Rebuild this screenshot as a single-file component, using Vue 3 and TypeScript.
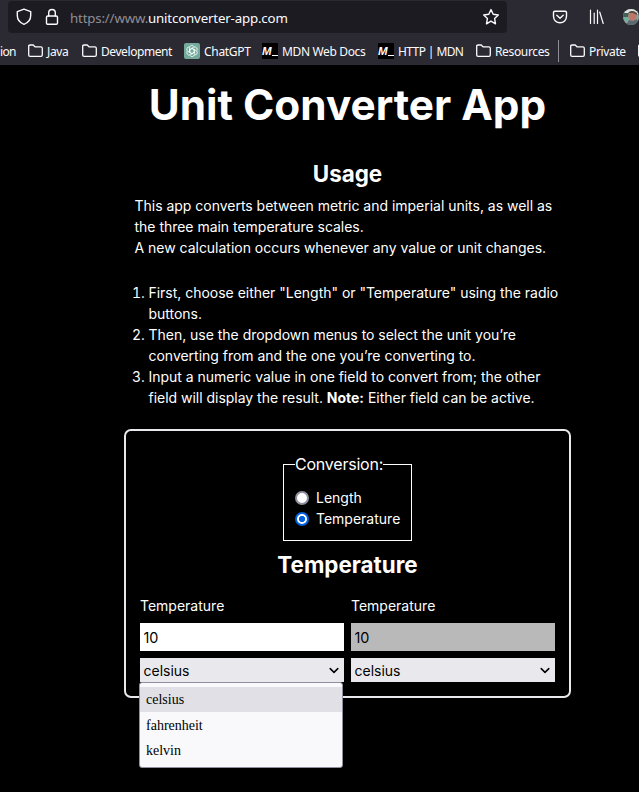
<script setup lang="ts">
import { ref } from 'vue'

interface Bookmark {
  label: string
  icon: 'none' | 'folder' | 'gpt' | 'mdn' | 'separator'
}

const bookmarks: Bookmark[] = [
  { label: 'ion', icon: 'none' },
  { label: 'Java', icon: 'folder' },
  { label: 'Development', icon: 'folder' },
  { label: 'ChatGPT', icon: 'gpt' },
  { label: 'MDN Web Docs', icon: 'mdn' },
  { label: 'HTTP | MDN', icon: 'mdn' },
  { label: 'Resources', icon: 'folder' },
  { label: '', icon: 'separator' },
  { label: 'Private', icon: 'folder' },
  { label: '', icon: 'folder' },
]

const conversions = ['Length', 'Temperature']
const conversion = ref('Temperature')
const units = ['celsius', 'fahrenheit', 'kelvin']
const fields = ref([
  { value: '10', unit: 'celsius', active: true, open: true },
  { value: '10', unit: 'celsius', active: false, open: false },
])
const petals = [0, 60, 120, 180, 240, 300]
</script>

<template>
  <div class="window">
    <header class="chrome">
      <div class="nav">
        <div class="urlbar">
          <svg class="shield" width="16" height="18" viewBox="0 0 16 18">
            <path d="M8 1.2 14.7 3.6V7.5C14.7 11.5 12.2 14.7 8 16.3 3.8 14.7 1.3 11.5 1.3 7.5V3.6Z" />
          </svg>
          <svg class="lock" width="14" height="18" viewBox="0 0 14 18">
            <rect x="1.5" y="8" width="11" height="8.3" rx="1.3" />
            <path d="M3.7 8V4.8a3.3 3.3 0 0 1 6.6 0V8" />
          </svg>
          <span class="url">https://www.<b>unitconverter-app.com</b></span>
          <svg class="star" width="18" height="18" viewBox="0 0 18 18">
            <path d="M9 1.6 11.2 6.3 16.3 7 12.6 10.5 13.5 15.8 9 13.2 4.5 15.8 5.4 10.5 1.7 7 6.8 6.3Z" />
          </svg>
        </div>
        <svg class="pocket" width="16" height="16" viewBox="0 0 16 16">
          <path d="M2.8 2.3H13.2Q14.5 2.3 14.5 3.6V7.3C14.5 11 11.7 13.7 8 13.7S1.5 11 1.5 7.3V3.6Q1.5 2.3 2.8 2.3Z" />
          <path d="M4.8 6.3 8 9.2 11.2 6.3" />
        </svg>
        <svg class="library" width="16" height="16" viewBox="0 0 16 16">
          <path d="M1.5 1V14.5M5.2 4V14.5M8.5 1V14.5M10.7 3 14.2 14.5" />
        </svg>
        <svg class="avatar" width="16" height="16" viewBox="0 0 16 16">
          <defs><clipPath id="face"><circle cx="8" cy="8" r="8" /></clipPath></defs>
          <g clip-path="url(#face)">
            <rect width="16" height="16" fill="#8fa39c" />
            <rect width="16" height="5" fill="#dce2df" />
            <path d="M0 4H6L5 8H0Z" fill="#446158" />
            <ellipse cx="9.5" cy="7" rx="4" ry="5" fill="#bd7769" />
            <path d="M5 4Q8 0 14 4V6L10 4Z" fill="#534a45" />
            <path d="M3 16 6 11 10 12 14 10 16 16Z" fill="#596b70" />
            <path d="M0 9H5L4 12Z" fill="#55bc9d" />
          </g>
        </svg>
      </div>
      <nav class="bookmarks">
        <div v-for="(b, i) in bookmarks" :key="i" class="bookmark">
          <svg v-if="b.icon === 'folder'" width="16" height="16" viewBox="0 0 16 16" class="folder">
            <path d="M.7 3.3Q.7 2 2 2H5.2L7 3.8H12.8Q14.3 3.8 14.3 5.3V12Q14.3 13.4 12.9 13.4H2.1Q.7 13.4.7 12Z" />
          </svg>
          <svg v-else-if="b.icon === 'gpt'" width="16" height="16" viewBox="0 0 16 16" class="gpt">
            <rect width="16" height="16" rx="2" fill="#74aa9c" stroke="none" />
            <path v-for="a in petals" :key="a" :transform="`rotate(${a} 8 8)`" d="M5.6 7V4.6Q5.7 2.5 7.8 2.3 9.2 2.3 10 3.5M5.6 6.8 8 5.4 10.5 6.8" />
          </svg>
          <span v-else-if="b.icon === 'mdn'" class="mdn"><i>M</i><u></u></span>
          <span v-else-if="b.icon === 'separator'" class="separator"></span>
          <span class="bookmark-label">{{ b.label }}</span>
        </div>
      </nav>
    </header>

    <main>
      <h1>Unit Converter App</h1>
      <section class="usage">
        <h2>Usage</h2>
        <p>
          This app converts between metric and imperial units, as well as<br />
          the three main temperature scales.<br />
          A new calculation occurs whenever any value or unit changes.
        </p>
        <ol>
          <li>First, choose either "Length" or "Temperature" using the radio<br />buttons.</li>
          <li>Then, use the dropdown menus to select the unit you’re<br />converting from and the one you’re converting to.</li>
          <li>Input a numeric value in one field to convert from; the other<br />field will display the result. <strong>Note:</strong> Either field can be active.</li>
        </ol>
      </section>

      <form class="card" @submit.prevent>
        <fieldset>
          <legend>Conversion:</legend>
          <label v-for="c in conversions" :key="c" class="choice">
            <input v-model="conversion" type="radio" name="conversion" :value="c" />
            <span>{{ c }}</span>
          </label>
        </fieldset>
        <h2>{{ conversion }}</h2>
        <div class="fields">
          <div v-for="(f, i) in fields" :key="i" class="field">
            <label :for="`value-${i}`">{{ conversion }}</label>
            <input :id="`value-${i}`" v-model="f.value" class="value" :class="{ inactive: !f.active }" type="text" />
            <div class="select">
              <button type="button" @click="f.open = !f.open">
                <span>{{ f.unit }}</span>
                <svg width="10" height="8" viewBox="0 0 10 8"><path d="M1.2 1.6 5 5.4 8.8 1.6" /></svg>
              </button>
              <ul v-if="f.open">
                <li v-for="u in units" :key="u" :class="{ selected: u === f.unit }" @click="f.unit = u; f.open = false">{{ u }}</li>
              </ul>
            </div>
          </div>
        </div>
      </form>
    </main>
  </div>
</template>

<style>
body { margin: 0; background: #000; overflow: hidden; }
</style>

<style scoped>
* { box-sizing: border-box; }
.window { width: 639px; height: 792px; overflow: hidden; background: #000; color: #fff; font: 14px/21px Inter, sans-serif; }
svg { flex: none; display: block; fill: none; stroke: #fbfbfe; stroke-width: 1.4; stroke-linejoin: round; stroke-linecap: round; }
.chrome { height: 65px; background: #2b2a33; font-family: "Noto Sans", sans-serif; color: #fbfbfe; }
.nav { height: 34px; display: flex; align-items: center; padding-left: 8px; }
.urlbar { width: 499px; height: 32px; display: flex; align-items: center; padding: 0 7px 0 8px; background: #1c1b22; border-radius: 4px; }
.lock { margin-left: 13px; }
.url { margin-left: 11px; flex: 1; padding-top: 2px; font-size: 13.3px; letter-spacing: -.18px; color: #8f8e96; white-space: nowrap; }
.url b { font-weight: 400; color: #fbfbfe; }
.pocket { margin-left: 45px; }
.library { margin-left: 21px; stroke-width: 1.2; }
.avatar { margin-left: 18px; stroke: none; }
.bookmarks { height: 31px; padding-top: 3px; display: grid; grid-template-columns: 28px 54px 102px 78px 116px 98px 82px 12px 68px 16px; align-items: center; }
.bookmark { display: flex; align-items: center; height: 24px; white-space: nowrap; font-size: 12px; letter-spacing: -.35px; }
.bookmark:first-child { letter-spacing: -.7px; }
.bookmark-label { padding-top: 1px; }
.bookmark:nth-child(3) .bookmark-label { letter-spacing: -.42px; }
.bookmark:nth-child(4) .bookmark-label { letter-spacing: -.3px; }
.bookmark:nth-child(6) .bookmark-label { letter-spacing: -.6px; }
.folder { width: 16px; margin-right: 3px; stroke-width: 1.3; }
.gpt { margin-right: 4px; stroke: #f3fbf8; stroke-width: .8; }
.mdn { flex: none; width: 16px; height: 16px; margin-right: 4px; display: flex; align-items: center; background: #000; letter-spacing: 0; }
.mdn i { width: 10px; font: italic 900 11.5px/14px "Liberation Sans", sans-serif; }
.mdn u { width: 6px; height: 1px; margin-top: 9px; background: #fff; }
.separator { width: 1px; height: 22px; background: #8f8e96; }

main { width: 447px; margin-left: 124px; }
h1 { margin: 0; padding-top: 11px; height: 92px; text-align: center; font-size: 42.3px; line-height: 58px; font-weight: 700; white-space: nowrap; }
h2 { margin: 0; text-align: center; font-size: 22.4px; line-height: 33px; font-weight: 700; }
.usage { letter-spacing: -.02px; }
.usage h2 { letter-spacing: 0; }
.usage p { margin: 5px 0 0 10.5px; white-space: nowrap; }
ol { margin: 24px 0 0; padding-left: 24.5px; white-space: nowrap; }
.card { margin-top: 21px; height: 269px; border: 2px solid #e9e9ed; border-radius: 7px; padding: 23px 14px 0; }
fieldset { width: 129px; margin: 0 auto; height: 87px; border: 1px solid #fff; padding: 12px 0 0 11px; }
legend { padding: 0; font-size: 16px; line-height: 21px; letter-spacing: -.22px; }
.choice { display: flex; align-items: center; height: 21px; }
.choice input { appearance: none; flex: none; width: 14px; height: 14px; margin: 0 7px 0 0; border: 2px solid #8f8f9d; border-radius: 50%; background: #fff; }
.choice input:checked { border-color: #0060df; background: radial-gradient(circle, #0060df 0 2.8px, #fff 3.4px); }
.card h2 { margin-top: 7px; }
.fields { margin-top: 14px; display: grid; grid-template-columns: 204px 204px; gap: 7px; }
.field > label { display: block; height: 28px; }
.value { display: block; width: 204px; height: 28px; margin: 0 0 7px; border: 0; border-radius: 0; padding: 1px 3.5px 0; background: #fff; color: #000; font: 14.4px Inter, sans-serif; outline: 0; }
.value.inactive { background: #b9b9b9; }
.select { position: relative; }
.select button { width: 204px; height: 24px; display: flex; align-items: center; justify-content: space-between; border: 0; padding: 1px 5px 0 3.5px; background: #e9e9ed; color: #000; font: 14px Inter, sans-serif; }
.select button svg { stroke: #000; stroke-width: 1.5; }
.select ul { position: absolute; z-index: 1; left: -1px; top: 24px; width: 204px; height: 86px; margin: 0; padding: 4px 0; list-style: none; background: #f9f9fb; border: 1px solid #8f8f9d; border-radius: 3px; color: #000; font: 14px/26px "Liberation Serif", serif; }
.select li { height: 25px; padding-left: 6px; }
.select li.selected { margin-bottom: 1px; background: #e0e0e6; }
</style>
